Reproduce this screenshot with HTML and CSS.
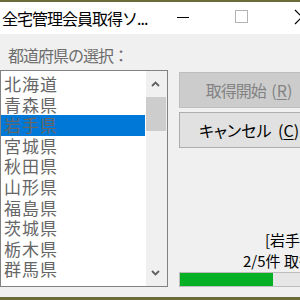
FILE: index.html
```html
<!DOCTYPE html>
<html lang="ja">
<head>
<meta charset="utf-8">
<link rel="stylesheet" href="styles.css">
</head>
<body>
<div class="topline"></div>
<div class="window">
  <div class="titlebar">
    <div class="title">全宅管理会員取得ソ...</div>
    <div class="ctl ctl-min"><span class="min-line"></span></div>
    <div class="ctl ctl-max"><span class="max-box"></span></div>
    <div class="ctl ctl-close">
      <svg width="16" height="16" viewBox="0 0 16 16"><path d="M1 1 L15 15 M15 1 L1 15" stroke="#000" stroke-width="1.2" fill="none"/></svg>
    </div>
  </div>
  <div class="content">
    <div class="label">都道府県の選択：</div>
    <div class="main">
      <div class="listbox">
        <div class="items">
          <div class="item">北海道</div>
          <div class="item">青森県</div>
          <div class="item selected">岩手県</div>
          <div class="item">宮城県</div>
          <div class="item">秋田県</div>
          <div class="item">山形県</div>
          <div class="item">福島県</div>
          <div class="item">茨城県</div>
          <div class="item">栃木県</div>
          <div class="item">群馬県</div>
        </div>
        <div class="scrollbar">
          <div class="sb-btn">
            <svg width="9" height="6" viewBox="0 0 9 6"><path d="M1 5 L4.5 1.5 L8 5" stroke="#606060" stroke-width="1.8" fill="none"/></svg>
          </div>
          <div class="sb-thumb"></div>
          <div class="sb-track"></div>
          <div class="sb-btn">
            <svg width="9" height="6" viewBox="0 0 9 6"><path d="M1 1 L4.5 4.5 L8 1" stroke="#606060" stroke-width="1.8" fill="none"/></svg>
          </div>
        </div>
      </div>
      <div class="side">
        <div class="btn btn-disabled">取得開始 <span class="key">(<u>R</u>)</span></div>
        <div class="btn btn-normal">キャンセル <span class="key">(<u>C</u>)</span></div>
        <div class="status">
          <div class="status-line line1">[岩手県]</div>
          <div class="status-line line2">2/5件 取得中...</div>
        </div>
        <div class="progress"><div class="progress-fill" style="width:93px"></div></div>
      </div>
    </div>
  </div>
</div>
<div class="bottomline"></div>
</body>
</html>
```

FILE: styles.css
```css
html, body {
  margin: 0;
  padding: 0;
}
body {
  width: 300px;
  height: 300px;
  overflow: hidden;
  background: #f0f0f0;
  font-family: "Noto Sans CJK JP", "Noto Sans", sans-serif;
}
.topline {
  height: 2px;
  background: #6b6b3a;
}
.window {
  width: 333px;
  background: #f0f0f0;
}
.titlebar {
  height: 32px;
  background: #ffffff;
  display: flex;
  align-items: center;
}
.title {
  width: 152px;
  padding-left: 2px;
  flex: none;
  font-size: 16px;
  letter-spacing: -1px;
  color: #000;
  white-space: nowrap;
  line-height: 20px;
}
.ctl {
  flex: none;
  height: 32px;
  display: flex;
  align-items: center;
  justify-content: center;
}
.ctl-min { width: 58px; }
.ctl-max { width: 59px; }
.ctl-close { width: 62px; }
.min-line {
  display: block;
  width: 12px;
  height: 1px;
  background: #000;
  margin-top: -1px;
}
.max-box {
  display: block;
  width: 11px;
  height: 11px;
  border: 1px solid #b4b4b4;
  margin-top: -3px;
}
.ctl-close svg {
  display: block;
  margin-top: -3px;
}
.content {
  padding-top: 11px;
  padding-bottom: 10px;
}
.label {
  margin-left: 8px;
  height: 20px;
  line-height: 20px;
  font-size: 16px;
  letter-spacing: -1px;
  color: #6d6d6d;
  white-space: nowrap;
}
.main {
  margin-top: 5px;
  display: flex;
}
.listbox {
  flex: none;
  width: 166px;
  height: 215px;
  border: 1px solid #828282;
  background: #fff;
  display: flex;
}
.items {
  width: 145px;
  padding-top: 3px;
  overflow: hidden;
}
.item {
  height: 20.6px;
  line-height: 20.6px;
  padding-left: 3px;
  font-size: 17px;
  letter-spacing: 1px;
  color: #666666;
  white-space: nowrap;
}
.item.selected {
  background: #0078d7;
  margin-right: 1px;
}
.scrollbar {
  width: 21px;
  background: #f0f0f0;
  display: flex;
  flex-direction: column;
}
.sb-btn {
  height: 26px;
  display: flex;
  align-items: center;
  justify-content: center;
  flex: none;
}
.sb-btn svg {
  display: block;
  margin-left: -3px;
}
.sb-thumb {
  height: 34px;
  margin: 0 1px 0 0;
  background: #cdcdcd;
  flex: none;
}
.sb-track {
  flex: 1;
}
.side {
  margin-left: 11px;
  padding-top: 2px;
  width: 150px;
  display: flex;
  flex-direction: column;
}
.btn {
  width: 138px;
  height: 34px;
  line-height: 34px;
  text-align: center;
  font-size: 16px;
  letter-spacing: -1px;
  white-space: nowrap;
}
.key {
  letter-spacing: 0;
  margin-left: 3px;
}
.btn u {
  text-underline-offset: 2px;
}
.btn-disabled {
  background: #cccccc;
  border: 1px solid #bfbfbf;
  color: #838383;
}
.btn-normal {
  margin-top: 4px;
  background: #e1e1e1;
  border: 1px solid #adadad;
  color: #000;
  font-feature-settings: "palt";
  letter-spacing: 0;
}
.status {
  margin-top: auto;
  font-size: 15px;
  color: #000;
  white-space: nowrap;
}
.status-line {
  height: 21px;
  line-height: 21px;
}
.line1 { padding-left: 86px; }
.line2 { padding-left: 64px; }
.progress {
  margin-top: 1px;
  width: 138px;
  height: 13px;
  border: 1px solid #bcbcbc;
  background: #e6e6e6;
}
.progress-fill {
  height: 13px;
  background: #06b025;
}
.bottomline {
  height: 3px;
  background: #6b6b3a;
}
```
